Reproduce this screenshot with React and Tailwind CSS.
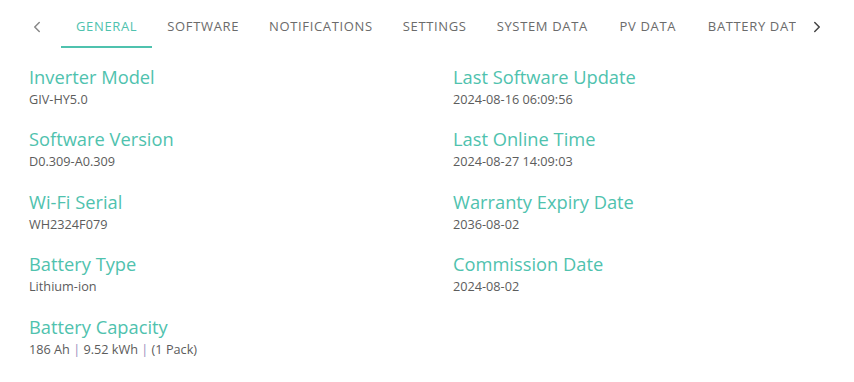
import { ChevronLeft, ChevronRight } from "lucide-react";

const tabs = [
  "General",
  "Software",
  "Notifications",
  "Settings",
  "System Data",
  "PV Data",
  "Battery Data",
];

const left = [
  ["Inverter Model", "GIV-HY5.0"],
  ["Software Version", "D0.309-A0.309"],
  ["Wi-Fi Serial", "WH2324F079"],
  ["Battery Type", "Lithium-ion"],
];

const right = [
  ["Last Software Update", "2024-08-16 06:09:56"],
  ["Last Online Time", "2024-08-27 14:09:03"],
  ["Warranty Expiry Date", "2036-08-02"],
  ["Commission Date", "2024-08-02"],
];

const Item = ({ label, children }) => (
  <div>
    <div className="text-[18.3px] leading-[26px] text-[#4fc2ae]">{label}</div>
    <div className="text-[12.7px] leading-[18px] text-[#5c5c5c]">{children}</div>
  </div>
);

export default function App() {
  return (
    <div
      className="w-[854px] h-[382px] bg-white overflow-hidden"
      style={{ fontFamily: '"Open Sans", sans-serif' }}
    >
      {/* tab bar */}
      <div className="flex h-[48px] items-stretch">
        <div className="ml-[12px] w-[49px] pt-[6px] flex items-center justify-center text-[#888]">
          <ChevronLeft size={18} strokeWidth={2} />
        </div>
        <div className="w-[735px] overflow-hidden flex">
          {tabs.map((t, i) => (
            <div
              key={t}
              className={
                "relative shrink-0 min-w-[90px] px-[15px] pt-[6px] flex items-center justify-center uppercase text-[13px] tracking-[0.65px] " +
                (i === 0 ? "text-[#4fc2ae]" : "text-[#6b6b6b]")
              }
            >
              {t}
              {i === 0 && (
                <div className="absolute left-0 right-0 bottom-0 h-[2px] bg-[#4fc2ae]" />
              )}
            </div>
          ))}
        </div>
        <div className="w-[42px] pt-[6px] flex items-center justify-center text-[#444]">
          <ChevronRight size={18} strokeWidth={2} />
        </div>
      </div>

      {/* details */}
      <div className="grid grid-cols-[424px_1fr] pl-[29px] pt-[15.5px]">
        <div className="flex flex-col gap-y-[18.5px]">
          {left.map(([l, v]) => (
            <Item key={l} label={l}>
              {v}
            </Item>
          ))}
          <Item label="Battery Capacity">
            186 Ah <span className="text-[#968bbd]">|</span> 9.52 kWh{" "}
            <span className="text-[#968bbd]">|</span> (1 Pack)
          </Item>
        </div>
        <div className="flex flex-col gap-y-[18.5px]">
          {right.map(([l, v]) => (
            <Item key={l} label={l}>
              {v}
            </Item>
          ))}
        </div>
      </div>
    </div>
  );
}
